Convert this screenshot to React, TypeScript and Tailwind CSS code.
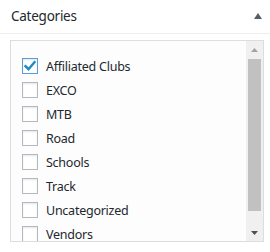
import React from 'react';

const categories = [
  { name: 'Affiliated Clubs', checked: true },
  { name: 'EXCO', checked: false },
  { name: 'MTB', checked: false },
  { name: 'Road', checked: false },
  { name: 'Schools', checked: false },
  { name: 'Track', checked: false },
  { name: 'Uncategorized', checked: false },
  { name: 'Vendors', checked: false },
];

const Checkbox: React.FC<{ checked: boolean }> = ({ checked }) => (
  <span
    className={`flex h-4 w-4 shrink-0 items-center justify-center border bg-white shadow-[inset_0_1px_2px_rgba(0,0,0,0.1)] ${
      checked ? 'border-[#5b9dd9]' : 'border-[#b4b9be]'
    }`}
  >
    {checked && (
      <svg width="14" height="14" viewBox="0 0 14 14">
        <path d="M2.5 7.2 L5.5 10.2 L11.5 3.2" fill="none" stroke="#1e8cbe" strokeWidth="2.4" strokeLinecap="square" />
      </svg>
    )}
  </span>
);

const App: React.FC = () => {
  return (
    <div className="h-[252px] w-[270px] overflow-hidden bg-white font-['Noto_Sans',sans-serif] text-[#23282d]">
      {/* Header */}
      <div className="flex h-[34px] items-center justify-between border-b border-[#eeeeee] pl-[11px] pr-[8px]">
        <h2 className="text-[13.5px] leading-none tracking-[-0.25px]">Categories</h2>
        <svg width="8" height="6" viewBox="0 0 8 6" className="mt-[-2px]">
          <polygon points="0,6 4,0 8,6" fill="#555d66" />
        </svg>
      </div>

      {/* Body */}
      <div className="pl-[10px] pt-[6px]">
        <div className="flex h-[202px] w-[254px] border border-[#dddddd] bg-[#fdfdfd]">
          <ul className="flex-1 overflow-hidden pl-[11px] pt-[13px]">
            {categories.map((c) => (
              <li key={c.name} className="flex h-[24px] items-center gap-[8px] text-[12.5px] tracking-[-0.25px]">
                <Checkbox checked={c.checked} />
                <span className="mt-[2px] leading-none">{c.name}</span>
              </li>
            ))}
          </ul>

          {/* Scrollbar */}
          <div className="flex w-[17px] flex-col bg-[#f0f0f0]">
            <div className="flex h-[17px] items-center justify-center">
              <svg width="7" height="4" viewBox="0 0 7 4">
                <polygon points="0,4 3.5,0 7,4" fill="#a3a3a3" />
              </svg>
            </div>
            <div className="mx-[2px] mt-[1px] h-[152px] bg-[#c1c1c1]" />
            <div className="flex-1" />
            <div className="flex h-[17px] items-center justify-center">
              <svg width="7" height="4" viewBox="0 0 7 4">
                <polygon points="0,0 3.5,4 7,0" fill="#505050" />
              </svg>
            </div>
          </div>
        </div>
      </div>
    </div>
  );
};

export default App;
